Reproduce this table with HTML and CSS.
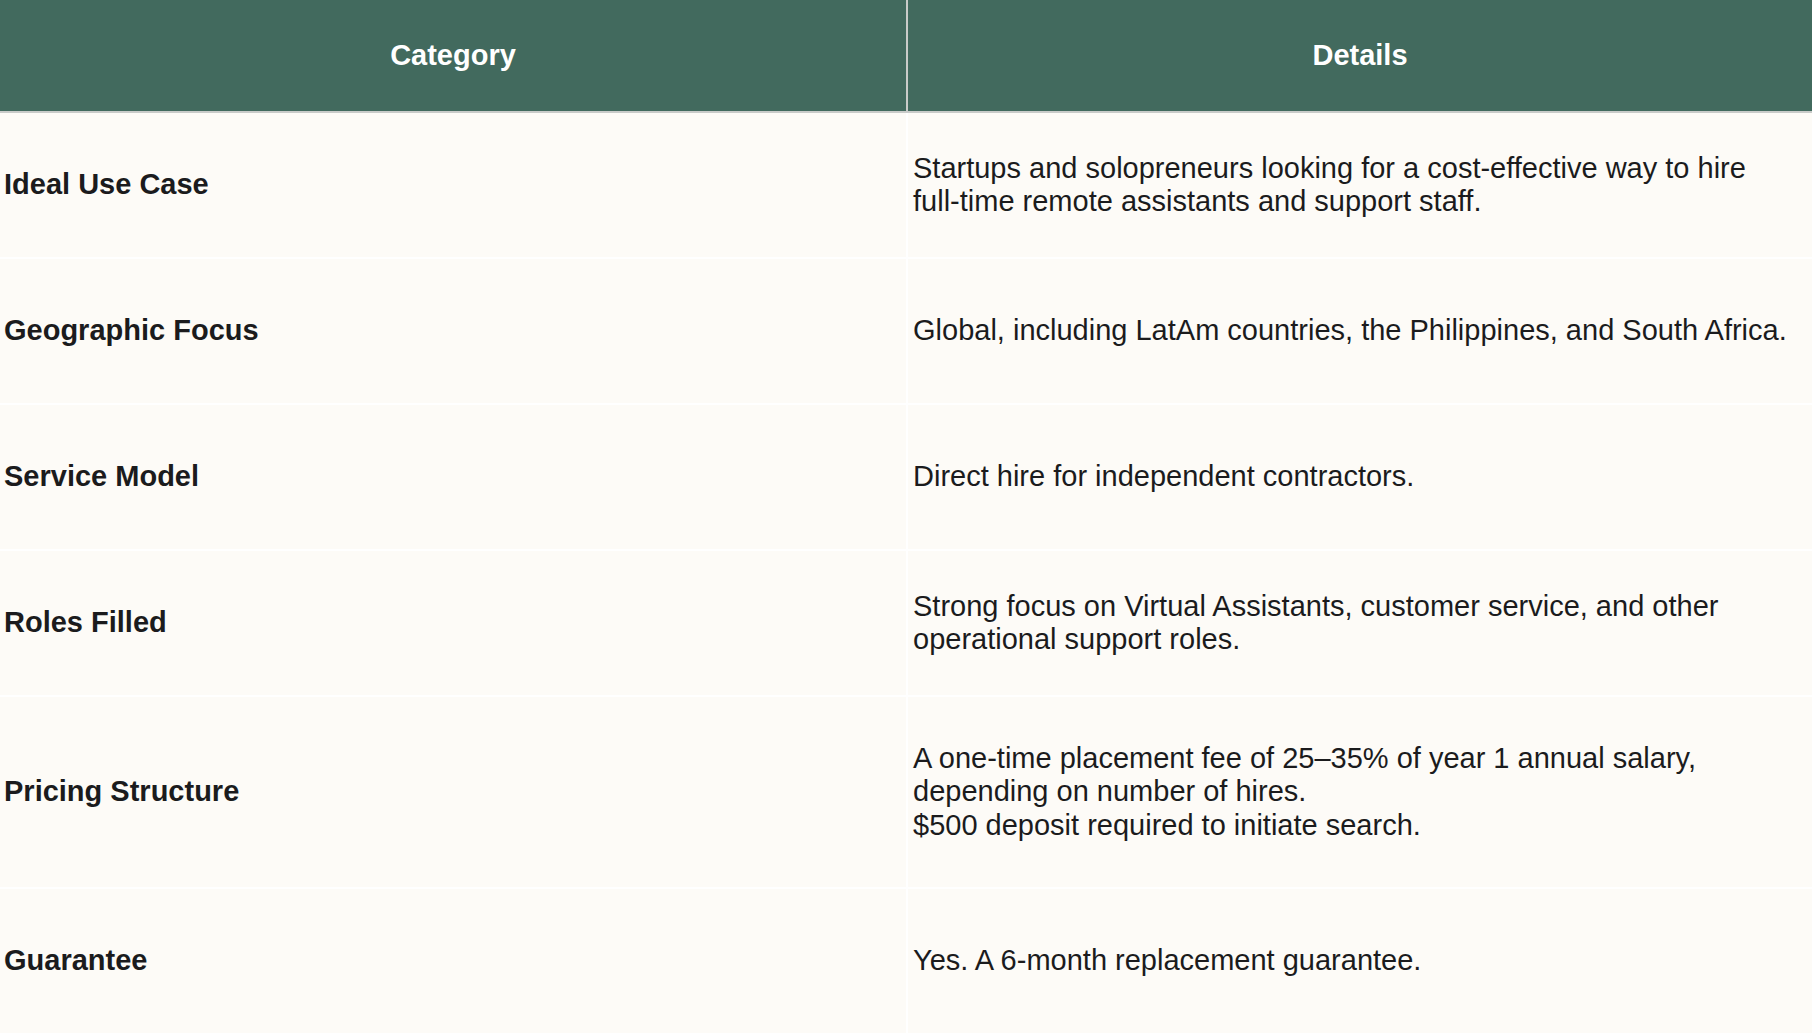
FILE: index.html
```html
<!DOCTYPE html>
<html lang="en">
<head>
<meta charset="utf-8">
<title>Comparison</title>
<link rel="stylesheet" href="styles.css">
</head>
<body>
<div class="table">
  <div class="head">
    <div class="th">Category</div>
    <div class="th">Details</div>
  </div>
  <div class="body">
    <div class="td label">Ideal Use Case</div>
    <div class="td">Startups and solopreneurs looking for a cost-effective way to hire<br>full-time remote assistants and support staff.</div>

    <div class="td label">Geographic Focus</div>
    <div class="td">Global, including LatAm countries, the Philippines, and South Africa.</div>

    <div class="td label">Service Model</div>
    <div class="td">Direct hire for independent contractors.</div>

    <div class="td label">Roles Filled</div>
    <div class="td">Strong focus on Virtual Assistants, customer service, and other<br>operational support roles.</div>

    <div class="td label tall">Pricing Structure</div>
    <div class="td tall">A one-time placement fee of 25–35% of year 1 annual salary,<br>depending on number of hires.<br>$500 deposit required to initiate search.</div>

    <div class="td label">Guarantee</div>
    <div class="td">Yes. A 6-month replacement guarantee.</div>
  </div>
</div>
</body>
</html>
```

FILE: styles.css
```css
html, body {
  margin: 0;
  padding: 0;
  background: #ffffff;
}

body {
  font-family: "Liberation Sans", Arial, Helvetica, sans-serif;
  font-size: 29px;
  line-height: 1.15;
  color: #1b1b1d;
}

.table {
  width: 1812px;
}

.head {
  display: grid;
  grid-template-columns: 906px 904px;
  column-gap: 2px;
  background: #c9cbc9;
  padding-bottom: 2px;
}

.th {
  background: #426a5e;
  color: #ffffff;
  font-weight: bold;
  height: 111px;
  display: flex;
  align-items: center;
  justify-content: center;
}

.body {
  display: grid;
  grid-template-columns: 906px 904px;
  gap: 2px;
  background: #ffffff;
}

.td {
  background: #fdfbf7;
  min-height: 144px;
  box-sizing: border-box;
  padding: 0 5px;
  display: flex;
  align-items: center;
}

.td.tall {
  min-height: 190px;
}

.label {
  font-weight: bold;
  padding-left: 4px;
}
```
